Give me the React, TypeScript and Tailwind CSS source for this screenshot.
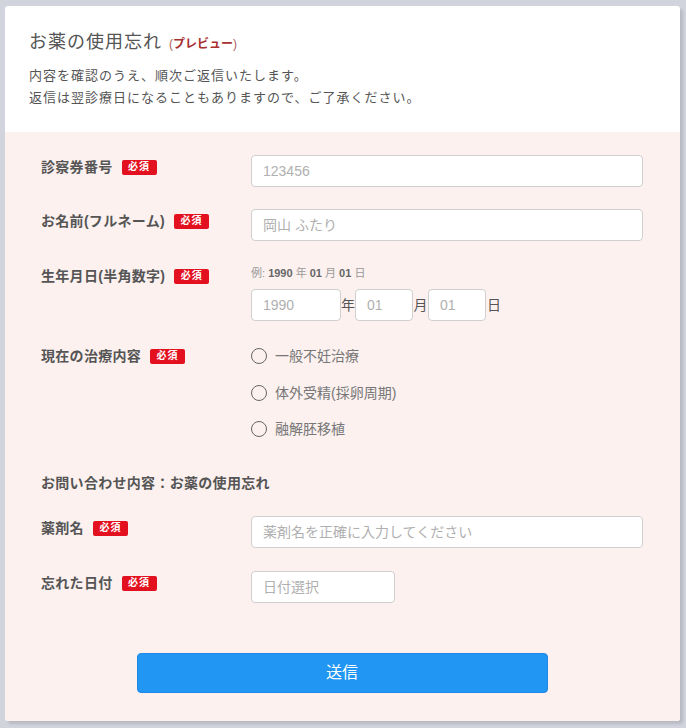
import React from "react";

const font = { fontFamily: '"Liberation Sans", "Noto Sans CJK JP", sans-serif' };

function Badge() {
  return (
    <span className="ml-[9px] inline-flex h-[15px] w-[35px] items-center justify-center rounded-[2px] bg-[#e3111f] text-[10px] leading-none font-bold tracking-[1px] text-white">
      必須
    </span>
  );
}

function Label({ text, mt = "mt-[2px]" }: { text: string; mt?: string }) {
  return (
    <div className={`flex h-[20px] w-[210px] shrink-0 items-center ${mt}`}>
      <span className="text-[14px] leading-[20px] font-bold tracking-[0.3px] text-[#555]">{text}</span>
      <Badge />
    </div>
  );
}

function TextInput({ placeholder, className = "w-full" }: { placeholder: string; className?: string }) {
  return (
    <input
      placeholder={placeholder}
      className={`h-[32px] rounded-[4px] border border-[#cfcfcf] bg-white px-[11px] text-[14px] text-[#555] placeholder:text-[#b0b0b0] outline-none ${className}`}
    />
  );
}

function Radio({ text }: { text: string }) {
  return (
    <label className="flex h-[20px] items-center gap-[8px]">
      <span className="h-[16px] w-[16px] rounded-full border-[1.5px] border-[#666]" />
      <span className="text-[14px] leading-[20px] text-[#777]">{text}</span>
    </label>
  );
}

export default function App() {
  return (
    <div style={font} className="min-h-[728px] bg-[#d1d4dd] pt-[6px] pl-[5px]">
      <div className="w-[675px] overflow-hidden rounded-[3px] bg-white shadow-[3px_3px_3px_rgba(0,0,0,0.12)]">
        {/* Header */}
        <div className="px-[24px] pt-[23px] pb-[23px]">
          <h1 className="flex items-baseline text-[18px] leading-[26px] tracking-[1px] text-[#555]">
            お薬の使用忘れ
            <span className="ml-[7px] text-[12px] font-bold tracking-normal text-[#a8302f]">
              <span className="font-normal text-[#b06060]">(</span>プレビュー<span className="font-normal text-[#b06060]">)</span>
            </span>
          </h1>
          <p className="mt-[8px] text-[13px] leading-[22px] tracking-[1px] text-[#555]">
            内容を確認のうえ、順次ご返信いたします。
            <br />
            返信は翌診療日になることもありますので、ご了承ください。
          </p>
        </div>

        {/* Form */}
        <div className="bg-[#fcf1ef] pr-[37px] pb-[28px] pl-[36px]">
          <div className="flex items-start pt-[23px]">
            <Label text="診察券番号" />
            <TextInput placeholder="123456" />
          </div>

          <div className="mt-[22px] flex items-start">
            <Label text="お名前(フルネーム)" />
            <TextInput placeholder="岡山 ふたり" />
          </div>

          <div className="mt-[24px] flex items-start">
            <Label text="生年月日(半角数字)" mt="mt-[1px]" />
            <div>
              <div className="text-[11px] leading-[16px] text-[#999]">
                例: <b className="text-[#666]">1990</b> 年 <b className="text-[#666]">01</b> 月{" "}
                <b className="text-[#666]">01</b> 日
              </div>
              <div className="mt-[8px] flex items-center text-[14px] text-[#555]">
                <TextInput placeholder="1990" className="w-[90px]" />
                <span className="w-[14px] text-center">年</span>
                <TextInput placeholder="01" className="w-[58px]" />
                <span className="w-[15px] text-center">月</span>
                <TextInput placeholder="01" className="w-[58px]" />
                <span className="ml-[1px]">日</span>
              </div>
            </div>
          </div>

          <div className="mt-[25px] flex items-start">
            <Label text="現在の治療内容" mt="mt-0" />
            <div className="flex flex-col gap-[16.5px]">
              <Radio text="一般不妊治療" />
              <Radio text="体外受精(採卵周期)" />
              <Radio text="融解胚移植" />
            </div>
          </div>

          <div className="mt-[34px] text-[14px] leading-[20px] font-bold tracking-[0.3px] text-[#555]">
            お問い合わせ内容：お薬の使用忘れ
          </div>

          <div className="mt-[23px] flex items-start">
            <Label text="薬剤名" />
            <TextInput placeholder="薬剤名を正確に入力してください" />
          </div>

          <div className="mt-[23px] flex items-start">
            <Label text="忘れた日付" />
            <TextInput placeholder="日付選択" className="w-[144px]" />
          </div>

          <div className="mt-[50px] flex justify-center">
            <button className="h-[40px] w-[411px] rounded-[4px] border border-[#1e88e5] bg-[#2196f3] text-[16px] text-white">
              送信
            </button>
          </div>
        </div>
      </div>
    </div>
  );
}
